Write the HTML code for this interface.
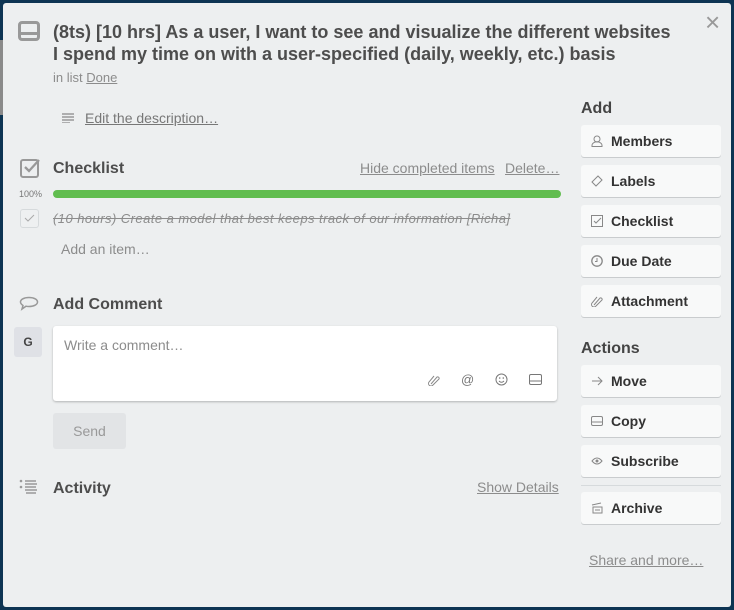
<!DOCTYPE html>
<html><head><style>
*{box-sizing:border-box;margin:0;padding:0}
body{width:734px;height:610px;background:#0d3453;font-family:"Liberation Sans",sans-serif;position:relative;overflow:hidden;color:#4d4d4d}
.m{position:absolute;left:3px;top:3px;width:728px;height:604px;background:#edeff0;border-radius:3px}
.a{position:absolute}
.h{font-weight:bold;font-size:16px;color:#4d4d4d}
.btn{position:absolute;left:581px;width:140px;height:32px;background:#f8f9f9;border-radius:3px;box-shadow:0 1px 0 #c9ccce;font-weight:bold;font-size:14px;color:#333;line-height:33px;padding-left:30px}
.btn svg{position:absolute;left:10px;top:10px}
.u{text-decoration:underline;color:#8c8c8c}
</style></head><body>
<div class="a" style="left:0;top:40px;width:3px;height:75px;background:#8a8a8a"></div>
<div class="m"></div>
<svg class="a" style="left:18px;top:21px" width="22" height="20" viewBox="0 0 22 20"><rect x="1.5" y="1.5" width="19" height="17" rx="2.5" fill="none" stroke="#999" stroke-width="3"/><rect x="2" y="11" width="18" height="3" fill="#999"/></svg>
<div class="a" style="left:53px;top:21px;white-space:nowrap;font-weight:bold;font-size:18px;letter-spacing:0px;line-height:22px;color:#4d4d4d">(8ts) [10 hrs] As a user, I want to see and visualize the different websites<br>I spend my time on with a user-specified (daily, weekly, etc.) basis</div>
<div class="a" style="left:705px;top:9px;font-size:26px;color:#999;line-height:26px">×</div>
<div class="a" style="left:53px;top:70px;font-size:13px;color:#8c8c8c">in list <span class="u">Done</span></div>
<svg class="a" style="left:62px;top:113px" width="12" height="10"><path d="M0 1h12M0 4h12M0 7h12M0 10h8" stroke="#888" stroke-width="1.2"/></svg>
<div class="a u" style="left:85px;top:110px;font-size:14px;color:#777">Edit the description…</div>
<div class="a" style="left:581px;top:100px;font-weight:bold;font-size:16px;color:#444">Add</div>
<div class="btn" style="top:125px"><svg width="12" height="12"><circle cx="6" cy="4" r="3" fill="none" stroke="#888"/><path d="M1 11.5h10v-1a4 3 0 0 0-10 0z" fill="none" stroke="#888"/></svg>Members</div>
<div class="btn" style="top:165px"><svg width="12" height="12"><path d="M7 1l4 4-6 6-4-4z" fill="none" stroke="#888"/></svg>Labels</div>
<div class="btn" style="top:205px"><svg width="12" height="12"><rect x=".5" y=".5" width="11" height="11" fill="none" stroke="#888"/><path d="M3 6l2 2 5-5" fill="none" stroke="#888"/></svg>Checklist</div>
<div class="btn" style="top:245px"><svg width="12" height="12"><circle cx="6" cy="6" r="5.2" fill="none" stroke="#888" stroke-width="1.3"/><path d="M6 3v3.5H4" fill="none" stroke="#888"/></svg>Due Date</div>
<div class="btn" style="top:285px"><svg width="12" height="12"><path d="M3 10L9 3a1.5 1.5 0 0 1 2 2L5 11a2.5 2.5 0 0 1-4-3l5-6" fill="none" stroke="#888"/></svg>Attachment</div>
<div class="a" style="left:581px;top:340px;font-weight:bold;font-size:16px;color:#444">Actions</div>
<div class="btn" style="top:365px"><svg width="12" height="12"><path d="M1 6h10M7 2l4 4-4 4" fill="none" stroke="#888"/></svg>Move</div>
<div class="btn" style="top:405px"><svg width="12" height="12"><rect x=".5" y="1.5" width="11" height="9" rx="1.5" fill="none" stroke="#888"/><path d="M1 7h10" stroke="#888"/></svg>Copy</div>
<div class="btn" style="top:445px"><svg width="12" height="12"><path d="M1 6q5-6 10 0q-5 6-10 0z" fill="none" stroke="#888"/><circle cx="6" cy="6" r="1.5" fill="#888"/></svg>Subscribe</div>
<div class="a" style="left:581px;top:485px;width:140px;height:1px;background:#d6dadc"></div>
<div class="btn" style="top:492px"><svg width="12" height="12"><path d="M1 3l9-2M2 5h9v6H2zM4 8h5" fill="none" stroke="#888"/></svg>Archive</div>
<div class="a u" style="left:589px;top:552px;font-size:14px">Share and more…</div>
<svg class="a" style="left:20px;top:157px" width="21" height="21"><rect x="1" y="3" width="17" height="17" rx="2" fill="none" stroke="#999" stroke-width="2"/><path d="M5 10l4 4 10-11" fill="none" stroke="#999" stroke-width="2.3"/></svg>
<div class="a h" style="left:53px;top:160px">Checklist</div>
<div class="a u" style="left:360px;top:160px;font-size:14px">Hide completed items</div>
<div class="a u" style="left:505px;top:160px;font-size:14px">Delete…</div>
<div class="a" style="left:19px;top:189px;font-size:9px;color:#777">100%</div>
<div class="a" style="left:53px;top:190px;width:508px;height:8px;border-radius:4px;background:#61bd4f"></div>
<div class="a" style="left:20px;top:209px;width:19px;height:19px;border:1px solid #d6dadc;border-radius:3px;background:#eef0f1"></div>
<svg class="a" style="left:24px;top:214px" width="11" height="9"><path d="M1 4l3 3 6-6" fill="none" stroke="#aaa"/></svg>
<div class="a" style="left:53px;top:211px;font-size:13px;font-style:italic;color:#8c8c8c;text-decoration:line-through;white-space:nowrap;letter-spacing:0.45px">(10 hours) Create a model that best keeps track of our information [Richa]</div>
<div class="a" style="left:61px;top:241px;font-size:14px;color:#8c8c8c">Add an item…</div>
<svg class="a" style="left:19px;top:296px" width="20" height="16"><path d="M10 1.5c5 0 8.5 2 8.5 4.5S15 10.5 10 10.5c-1 0-2 0-3-.3L3 13l1-3.5C2.5 8.5 1.5 7.3 1.5 6 1.5 3.5 5 1.5 10 1.5z" fill="none" stroke="#999" stroke-width="1.5"/></svg>
<div class="a h" style="left:53px;top:296px">Add Comment</div>
<div class="a" style="left:14px;top:327px;width:28px;height:30px;background:#dfe1e6;border-radius:3px;font-weight:bold;font-size:12px;color:#444;text-align:center;line-height:30px">G</div>
<div class="a" style="left:53px;top:326px;width:504px;height:75px;background:#fff;border-radius:3px;box-shadow:0 1px 2px rgba(0,0,0,.25)"></div>
<div class="a" style="left:64px;top:337px;font-size:14px;color:#8c8c8c">Write a comment…</div>
<svg class="a" style="left:428px;top:374px" width="12" height="12"><path d="M3 10L9 3a1.5 1.5 0 0 1 2 2L5 11a2.5 2.5 0 0 1-4-3l5-6" fill="none" stroke="#888"/></svg>
<div class="a" style="left:461px;top:372px;font-size:13px;color:#777">@</div>
<svg class="a" style="left:495px;top:373px" width="13" height="13"><circle cx="6.5" cy="6.5" r="5.5" fill="none" stroke="#777"/><circle cx="4.7" cy="5" r=".8" fill="#777"/><circle cx="8.3" cy="5" r=".8" fill="#777"/><path d="M4 8q2.5 2.5 5 0" fill="none" stroke="#777"/></svg>
<svg class="a" style="left:529px;top:374px" width="13" height="12"><rect x=".5" y=".5" width="12" height="10" rx="1.5" fill="none" stroke="#777"/><path d="M1 7h11" stroke="#777"/></svg>
<div class="a" style="left:53px;top:413px;width:73px;height:36px;background:#e2e4e6;border-radius:3px;text-align:center;line-height:36px;font-size:14px;color:#999">Send</div>
<svg class="a" style="left:19px;top:478px" width="20" height="18"><circle cx="2" cy="3" r="1.3" fill="#999"/><circle cx="2" cy="9" r="1.3" fill="#999"/><path d="M6 3h11M6 9h11M7 15h10M6 6h12M6 12h12" stroke="#999" stroke-width="1.6"/></svg>
<div class="a h" style="left:53px;top:480px">Activity</div>
<div class="a u" style="left:477px;top:479px;font-size:14px">Show Details</div>
</body></html>
